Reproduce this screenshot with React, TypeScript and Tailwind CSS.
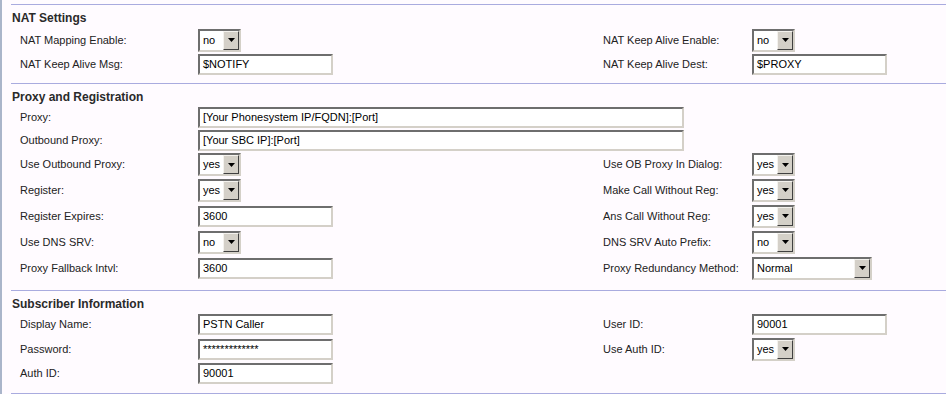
import React from 'react';

const font = { fontFamily: '"Liberation Sans", Arial, sans-serif' };

const TextBox: React.FC<{ value: string; w?: string }> = ({ value, w = 'w-[135px]' }) => (
  <div
    className={`${w} h-[21px] bg-white border-2 border-[#d4d0c8] border-t-[#6e6e6e] border-l-[#6e6e6e] flex items-center pl-[3px] text-[11px] text-black whitespace-nowrap overflow-hidden`}
  >
    {value}
  </div>
);

const Select: React.FC<{ value: string; w?: string }> = ({ value, w = 'w-[43px]' }) => (
  <div
    className={`${w} h-[23px] bg-white border-2 border-[#d4d0c8] border-t-[#6e6e6e] border-l-[#6e6e6e] flex items-stretch text-[11px] text-black`}
  >
    <span className="flex-1 flex items-center pl-[3px] whitespace-nowrap">{value}</span>
    <span className="w-[16px] bg-[#d4d0c8] border border-[#404040] border-t-[#f4f2ee] border-l-[#f4f2ee] flex items-center justify-center">
      <svg width="7" height="4" viewBox="0 0 7 4">
        <polygon points="0,0 7,0 3.5,4" fill="#000" />
      </svg>
    </span>
  </div>
);

type RowProps = {
  h: string;
  label: string;
  control: React.ReactNode;
  rLabel?: string;
  rControl?: React.ReactNode;
  wide?: boolean;
};

const Row: React.FC<RowProps> = ({ h, label, control, rLabel, rControl, wide }) => (
  <div className={`grid grid-cols-[178px_405px_149px_1fr] items-center ${h} text-[11px] text-[#222]`}>
    <div className="whitespace-nowrap">{label}</div>
    {wide ? (
      <div className="col-span-3">{control}</div>
    ) : (
      <>
        <div>{control}</div>
        <div className="whitespace-nowrap">{rLabel}</div>
        <div>{rControl}</div>
      </>
    )}
  </div>
);

const Section: React.FC<{ title: string; pb: string; children: React.ReactNode }> = ({ title, pb, children }) => (
  <div className={`border-t border-[#a9abdf] ${pb}`}>
    <div className="h-[22px] pt-[6px] pl-[1px] text-[12px] leading-[14px] font-bold text-[#2a2a2a]">{title}</div>
    <div className="pl-[9px]">{children}</div>
  </div>
);

export default function App() {
  return (
    <div className="flex w-[946px] h-[394px] bg-[#fffbff] overflow-hidden" style={font}>
      <div className="w-[2px] bg-[#aab5ca]" />
      <div className="flex-1 pl-[9px] pt-[4px]">
        <Section title="NAT Settings" pb="pb-[7px]">
          <Row h="h-[26px]" label="NAT Mapping Enable:" control={<Select value="no" />} rLabel="NAT Keep Alive Enable:" rControl={<Select value="no" />} />
          <Row h="h-[23px]" label="NAT Keep Alive Msg:" control={<TextBox value="$NOTIFY" />} rLabel="NAT Keep Alive Dest:" rControl={<TextBox value="$PROXY" />} />
        </Section>
        <Section title="Proxy and Registration" pb="pb-[9px]">
          <Row h="h-[23px]" wide label="Proxy:" control={<TextBox w="w-[486px]" value="[Your Phonesystem IP/FQDN]:[Port]" />} />
          <Row h="h-[23px]" wide label="Outbound Proxy:" control={<TextBox w="w-[486px]" value="[Your SBC IP]:[Port]" />} />
          <Row h="h-[25px]" label="Use Outbound Proxy:" control={<Select value="yes" />} rLabel="Use OB Proxy In Dialog:" rControl={<Select value="yes" />} />
          <Row h="h-[26px]" label="Register:" control={<Select value="yes" />} rLabel="Make Call Without Reg:" rControl={<Select value="yes" />} />
          <Row h="h-[26px]" label="Register Expires:" control={<TextBox value="3600" />} rLabel="Ans Call Without Reg:" rControl={<Select value="yes" />} />
          <Row h="h-[26px]" label="Use DNS SRV:" control={<Select value="no" />} rLabel="DNS SRV Auto Prefix:" rControl={<Select value="no" />} />
          <Row h="h-[26px]" label="Proxy Fallback Intvl:" control={<TextBox value="3600" />} rLabel="Proxy Redundancy Method:" rControl={<Select w="w-[120px]" value="Normal" />} />
        </Section>
        <Section title="Subscriber Information" pb="pb-[8px]">
          <Row h="h-[23px]" label="Display Name:" control={<TextBox value="PSTN Caller" />} rLabel="User ID:" rControl={<TextBox value="90001" />} />
          <Row h="h-[26px]" label="Password:" control={<TextBox value="*************" />} rLabel="Use Auth ID:" rControl={<Select value="yes" />} />
          <Row h="h-[23px]" label="Auth ID:" control={<TextBox value="90001" />} />
        </Section>
        <div className="border-t border-[#a9abdf]" />
      </div>
    </div>
  );
}
